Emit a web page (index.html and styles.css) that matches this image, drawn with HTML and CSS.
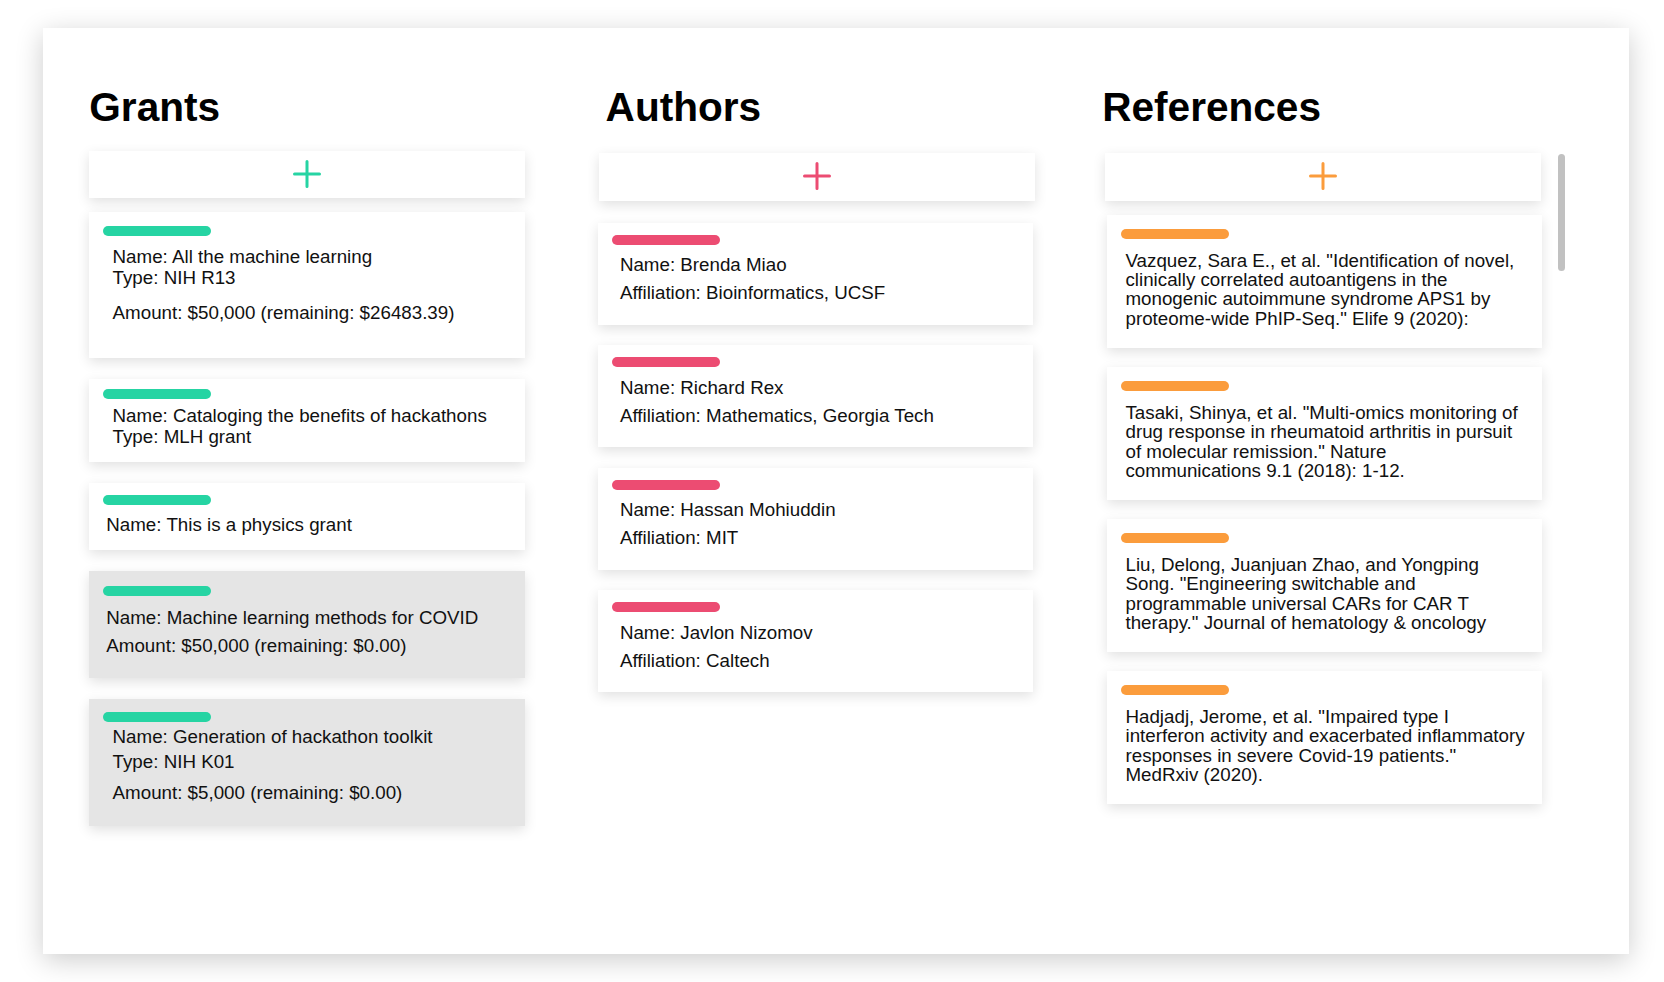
FILE: index.html
```html
<!DOCTYPE html>
<html lang="en">
<head>
<meta charset="utf-8">
<title>Grants, Authors, References</title>
<link rel="stylesheet" href="styles.css">
</head>
<body>
<div class="page">
  <main class="panel">
    <section class="col col--grants">
      <h2 class="col-title col-title--grants">Grants</h2>
      <button class="add add--green add--grants" type="button" aria-label="Add grant">
        <svg class="plus" viewBox="0 0 28 28" width="28" height="28"><path d="M14 1.5V26.5M1.5 14H26.5" stroke="currentColor" stroke-width="3" stroke-linecap="round" fill="none"/></svg>
      </button>
      <div class="cards cards--grants">
        <article class="card card--g1">
          <div class="bar bar--green"></div>
          <div class="txt txt--wide">
            <p class="ln">Name: All the machine learning</p>
            <p class="ln">Type: NIH R13</p>
            <p class="ln ln--amount">Amount: $50,000 (remaining: $26483.39)</p>
          </div>
        </article>
        <article class="card card--g2">
          <div class="bar bar--green"></div>
          <div class="txt txt--wide">
            <p class="ln">Name: Cataloging the benefits of hackathons</p>
            <p class="ln">Type: MLH grant</p>
          </div>
        </article>
        <article class="card card--g3">
          <div class="bar bar--green"></div>
          <div class="txt txt--narrow">
            <p class="ln">Name: This is a physics grant</p>
          </div>
        </article>
        <article class="card card--g4 card--muted">
          <div class="bar bar--green"></div>
          <div class="txt txt--narrow">
            <p class="ln ln--28">Name: Machine learning methods for COVID</p>
            <p class="ln ln--28">Amount: $50,000 (remaining: $0.00)</p>
          </div>
        </article>
        <article class="card card--g5 card--muted">
          <div class="bar bar--green"></div>
          <div class="txt txt--wide">
            <p class="ln ln--25">Name: Generation of hackathon toolkit</p>
            <p class="ln ln--25">Type: NIH K01</p>
            <p class="ln ln--25 ln--amount5">Amount: $5,000 (remaining: $0.00)</p>
          </div>
        </article>
      </div>
    </section>

    <section class="col col--authors">
      <h2 class="col-title col-title--authors">Authors</h2>
      <button class="add add--pink add--authors" type="button" aria-label="Add author">
        <svg class="plus" viewBox="0 0 28 28" width="28" height="28"><path d="M14 1.5V26.5M1.5 14H26.5" stroke="currentColor" stroke-width="3" stroke-linecap="round" fill="none"/></svg>
      </button>
      <div class="cards cards--authors">
        <article class="card card--author">
          <div class="bar bar--pink"></div>
          <div class="txt txt--author">
            <p class="ln ln--28">Name: Brenda Miao</p>
            <p class="ln ln--28">Affiliation: Bioinformatics, UCSF</p>
          </div>
        </article>
        <article class="card card--author">
          <div class="bar bar--pink"></div>
          <div class="txt txt--author">
            <p class="ln ln--28">Name: Richard Rex</p>
            <p class="ln ln--28">Affiliation: Mathematics, Georgia Tech</p>
          </div>
        </article>
        <article class="card card--author">
          <div class="bar bar--pink"></div>
          <div class="txt txt--author">
            <p class="ln ln--28">Name: Hassan Mohiuddin</p>
            <p class="ln ln--28">Affiliation: MIT</p>
          </div>
        </article>
        <article class="card card--author">
          <div class="bar bar--pink"></div>
          <div class="txt txt--author">
            <p class="ln ln--28">Name: Javlon Nizomov</p>
            <p class="ln ln--28">Affiliation: Caltech</p>
          </div>
        </article>
      </div>
    </section>

    <section class="col col--refs">
      <h2 class="col-title col-title--refs">References</h2>
      <div class="scroll-area">
        <div class="scroll-content">
          <button class="add add--orange add--refs" type="button" aria-label="Add reference">
            <svg class="plus" viewBox="0 0 28 28" width="28" height="28"><path d="M14 1.5V26.5M1.5 14H26.5" stroke="currentColor" stroke-width="3" stroke-linecap="round" fill="none"/></svg>
          </button>
          <div class="cards cards--refs">
            <article class="card card--ref">
              <div class="bar bar--orange"></div>
              <p class="ref-text">Vazquez, Sara E., et al. "Identification of novel, clinically correlated autoantigens in the monogenic autoimmune syndrome APS1 by proteome-wide PhIP-Seq." Elife 9 (2020):</p>
            </article>
            <article class="card card--ref">
              <div class="bar bar--orange"></div>
              <p class="ref-text">Tasaki, Shinya, et al. "Multi-omics monitoring of drug response in rheumatoid arthritis in pursuit of molecular remission." Nature communications 9.1 (2018): 1-12.</p>
            </article>
            <article class="card card--ref">
              <div class="bar bar--orange"></div>
              <p class="ref-text">Liu, Delong, Juanjuan Zhao, and Yongping Song. "Engineering switchable and programmable universal CARs for CAR T therapy." Journal of hematology &amp; oncology</p>
            </article>
            <article class="card card--ref">
              <div class="bar bar--orange"></div>
              <p class="ref-text">Hadjadj, Jerome, et al. "Impaired type I interferon activity and exacerbated inflammatory responses in severe Covid-19 patients." MedRxiv (2020).</p>
            </article>
          </div>
        </div>
        <div class="scroll-thumb"></div>
      </div>
    </section>
  </main>
</div>
</body>
</html>
```

FILE: styles.css
```css
* {
  box-sizing: border-box;
}

html, body {
  margin: 0;
  background: #ffffff;
}

body {
  font-family: "Liberation Sans", Arial, sans-serif;
  color: #111111;
}

.page {
  padding: 28px 35px 28px 42.7px;
}

.panel {
  height: 926px;
  background: #ffffff;
  box-shadow: 0 6px 26px rgba(0, 0, 0, 0.2);
  padding: 55.2px 0 0 46.6px;
  display: grid;
  grid-template-columns: 436px 436px auto;
  column-gap: 73px;
  align-items: start;
}

.col {
  display: flex;
  flex-direction: column;
}

.col-title {
  margin: 0 0 22.1px;
  font-size: 40.6px;
  line-height: 48px;
  font-weight: 700;
  color: #000000;
}

.col-title--authors {
  margin-left: 7.3px;
}

.col-title--refs {
  margin-left: -5.1px;
}

/* add buttons */
.add {
  display: flex;
  align-items: center;
  justify-content: center;
  width: 100%;
  height: 47.7px;
  border: 0;
  padding: 0 0 2px;
  background: #ffffff;
  box-shadow: 0 4px 12px rgba(0, 0, 0, 0.12);
  cursor: pointer;
}

.add--grants {
  margin-top: -2.6px;
  margin-bottom: 13.4px;
}

.add--authors {
  margin-left: 0.7px;
  margin-bottom: 22px;
}

.add--refs {
  margin-left: -2.3px;
  margin-bottom: 13.7px;
}

.add--green { color: #26d4a3; }
.add--pink { color: #ec4c72; }
.add--orange { color: #fb9c3c; }

.plus {
  display: block;
}

/* card lists */
.cards {
  display: flex;
  flex-direction: column;
}

.cards--grants { gap: 21px; }
.cards--authors { gap: 20.5px; }
.cards--refs { gap: 18.5px; }

.card {
  background: #ffffff;
  box-shadow: 0 4px 12px rgba(0, 0, 0, 0.12);
  padding-left: 14px;
  padding-right: 14px;
}

.card--muted {
  background: #e5e5e5;
}

.bar {
  width: 108px;
  height: 10px;
  border-radius: 5px;
}

.bar--green { background: #26d4a3; }
.bar--pink { background: #ec4c72; }
.bar--orange { background: #fb9c3c; }

.ln {
  margin: 0;
  font-size: 18.75px;
  line-height: 21px;
  white-space: nowrap;
}

.ln--28 { line-height: 28px; }
.ln--25 { line-height: 25px; }
.ln--amount { margin-top: 14px; }
.ln--amount5 { margin-top: 6px; }

.txt--wide { margin-left: 9.3px; }
.txt--narrow { margin-left: 3px; }
.txt--author { margin-left: 7.6px; }

/* grant card variants */
.card--g1 { padding-top: 14.3px; padding-bottom: 34.6px; }
.card--g1 .bar { margin-bottom: 10.1px; }

.card--g2 { padding-top: 10.3px; padding-bottom: 15.3px; }
.card--g2 .bar { margin-bottom: 6.1px; }

.card--g3 { padding-top: 11.7px; padding-bottom: 15.9px; }
.card--g3 .bar { margin-bottom: 8.4px; }

.card--g4 { padding-top: 15px; padding-bottom: 18.7px; }
.card--g4 .bar { margin-bottom: 7.3px; }

.card--g5 { padding-top: 12.3px; padding-bottom: 20.9px; }
.card--g5 .bar { margin-bottom: 2.5px; }

/* author cards */
.card--author { padding-top: 12px; padding-bottom: 17.7px; width: 434.7px; }
.card--author .bar { margin-bottom: 6.3px; }

/* reference cards */
.scroll-area {
  display: flex;
  align-items: flex-start;
}

.scroll-content {
  width: 436px;
  display: flex;
  flex-direction: column;
}

.card--ref {
  padding-top: 14.3px;
  padding-bottom: 20.2px;
  width: 434.7px;
}

.card--ref .bar { margin-bottom: 11.9px; }

.ref-text {
  margin: 0 2.5px 0 4.2px;
  font-size: 18.75px;
  line-height: 19.3px;
}

.scroll-thumb {
  flex: none;
  width: 7.3px;
  height: 116.7px;
  margin-top: 0.7px;
  margin-left: 14.7px;
  border-radius: 4px;
  background: #c1c1c1;
}
```
